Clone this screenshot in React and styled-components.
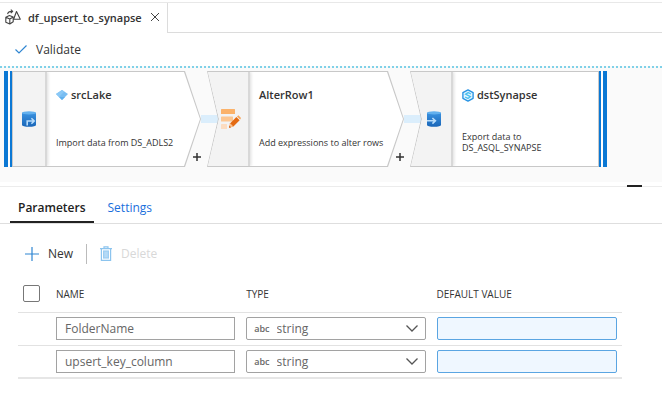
import React, { useState } from 'react';
import styled, { createGlobalStyle } from 'styled-components';

const steps = [
    { name: 'srcLake', text: 'Import data from DS_ADLS2', kind: 'source' },
    { name: 'AlterRow1', text: 'Add expressions to alter rows', kind: 'alter' },
    { name: 'dstSynapse', text: 'Export data to DS_ASQL_SYNAPSE', kind: 'sink' }
];

const parameters = [
    { name: 'FolderName', type: 'string', value: '' },
    { name: 'upsert_key_column', type: 'string', value: '' }
];

function FlowIcon(){
    return(
        <svg width='16' height='16' viewBox='0 0 16 16' fill='none' stroke='#444' strokeWidth='1.1' strokeLinejoin='round'>
            <path d='M11.5 2.5L15.3 10.2H8.6Z' />
            <path d='M.8 8.2L4.4 6.6L8.2 8V12.8L4.8 15L.8 13.2Z M.8 8.2L4.8 10L8.2 8 M4.8 10V15' />
            <path d='M2.6 5.2C3 3.2 4.6 2.2 7.4 2.4M5.8 .6L7.7 2.4L5.8 4.2' />
        </svg>
    )
}

function DatabaseIcon({ sink }){
    return(
        <svg width='14' height='16' viewBox='0 0 14 16'>
            <defs>
                <linearGradient id='drum' x1='0' y1='0' x2='0' y2='1'>
                    <stop offset='0' stopColor='#3a92e0' />
                    <stop offset='1' stopColor='#1a66b8' />
                </linearGradient>
            </defs>
            <path d='M0 1.8V14C0 15 3 15.8 7 15.8S14 15 14 14V1.8Z' fill='url(#drum)' />
            <ellipse cx='7' cy='1.9' rx='7' ry='1.7' fill='#62b0ee' />
            {sink
                ? <path d='M0 9.8H8M5.4 7L8.4 9.8L5.4 12.6' fill='none' stroke='#b8dcfa' strokeWidth='1.6' />
                : <path d='M5.2 14.6V10H12M9.4 7.2L12.2 10L9.4 12.8' fill='none' stroke='#b8dcfa' strokeWidth='1.6' />}
        </svg>
    )
}

function AlterIcon(){
    return(
        <svg width='20' height='20' viewBox='0 0 20 20'>
            <rect x='0' y='0' width='14' height='5' rx='.5' fill='#fbb26a' />
            <rect x='0' y='7.4' width='12' height='5' rx='.5' fill='#fcc691' />
            <rect x='0' y='15' width='6' height='5' rx='.5' fill='#fcdcc0' />
            <path d='M8 18.8L9.2 14.2L15.4 8L18.6 11.2L12.4 17.4Z' fill='#e46a12' />
            <path d='M16 7.4L17.4 6.2L20 9L19.2 10.6Z' fill='#f5a55c' />
            <path d='M8 18.8L9.2 14.2L12.4 17.4Z' fill='#f9c08c' />
            <path d='M8 18.8L8.6 16.8L10 18.2Z' fill='#c95508' />
        </svg>
    )
}

function LakeIcon(){
    return(
        <svg width='12' height='12' viewBox='0 0 12 12'>
            <path d='M0 5L6 1L12 5L6 11Z' fill='#78bdf2' />
            <path d='M0 5L6 1L8.4 2.6L3 8Z' fill='#8ac8f6' />
            <path d='M3 8H9L6 11Z' fill='#5fb0ee' />
        </svg>
    )
}

function SynapseIcon(){
    return(
        <svg width='12' height='13' viewBox='0 0 12 13'>
            <path d='M6 .9L11.1 3.7V9.3L6 12.1L.9 9.3V3.7Z' fill='#e4f6ff' stroke='#2b95e4' strokeWidth='1.4' strokeLinejoin='round' />
            <path d='M9 5L6.2 3.6L3.6 5.2L8.4 7.6L6 9.4L3 8' fill='none' stroke='#4cc0f0' strokeWidth='1.3' />
        </svg>
    )
}

function Step({ step, last }){
    return(
        <StepBox>
            <Outline $kind={step.kind}>
                {step.kind === 'source' && <EdgeBars />}
                <Face $kind={step.kind}>
                    <StepIcon $kind={step.kind}>
                        {step.kind === 'alter' ? <AlterIcon /> : <DatabaseIcon sink={step.kind === 'sink'} />}
                    </StepIcon>
                    <StepBody>
                        <StepName>
                            {step.kind === 'source' && <LakeIcon />}
                            {step.kind === 'sink' && <SynapseIcon />}
                            {step.name}
                        </StepName>
                        <StepText>{step.text}</StepText>
                    </StepBody>
                </Face>
                {step.kind === 'sink' && <EdgeBars $right />}
            </Outline>
            {!last && <Connector />}
            {!last && (
                <AddButton aria-label='Add step'>
                    <svg width='8' height='8' viewBox='0 0 8 8' stroke='#333' strokeWidth='1.5'>
                        <path d='M4 0V8M0 4H8' />
                    </svg>
                </AddButton>
            )}
        </StepBox>
    )
}

function App(){
    const [rows, setRows] = useState(parameters);

    const update = (index, key, value) => {
        setRows(rows.map((row, i) => i === index ? { ...row, [key]: value } : row));
    }

    return(
        <Page>
            <GlobalStyle />
            <TabStrip>
                <FileTab>
                    <FlowIcon />
                    <span>df_upsert_to_synapse</span>
                    <IconButton aria-label='Close'>
                        <svg width='8' height='8' viewBox='0 0 8 8' stroke='#444' strokeWidth='1'>
                            <path d='M0 0L8 8M8 0L0 8' />
                        </svg>
                    </IconButton>
                </FileTab>
            </TabStrip>

            <Toolbar>
                <ToolButton>
                    <svg width='12' height='9' viewBox='0 0 12 9' fill='none' stroke='#2f86d2' strokeWidth='1.2'>
                        <path d='M.5 4.5L4 8L11.5 .5' />
                    </svg>
                    Validate
                </ToolButton>
            </Toolbar>

            <Canvas>
                {steps.map((step, i) => (
                    <Step key={step.name} step={step} last={i === steps.length - 1} />
                ))}
            </Canvas>
            <Splitter><Handle /></Splitter>

            <PanelTabs>
                <PanelTab $active>Parameters</PanelTab>
                <PanelTab>Settings</PanelTab>
            </PanelTabs>

            <Actions>
                <ActionButton>
                    <svg width='14' height='14' viewBox='0 0 14 14' stroke='#2f86d2' strokeWidth='1.2'>
                        <path d='M7 0V14M0 7H14' />
                    </svg>
                    New
                </ActionButton>
                <Separator />
                <ActionButton disabled>
                    <svg width='12' height='15' viewBox='0 0 12 15' fill='none' stroke='#8cc4ee' strokeWidth='1.2'>
                        <path d='M0 2.6H12M4 2.4V.8H8V2.4M1.4 2.8V14.4H10.6V2.8' />
                        <rect x='3.6' y='5' width='4.8' height='7' fill='#b5daf6' stroke='#9ccdf2' />
                    </svg>
                    Delete
                </ActionButton>
            </Actions>

            <ParamTable>
                <colgroup>
                    <CheckCol />
                    <FieldCol />
                    <FieldCol />
                    <col />
                </colgroup>
                <thead>
                    <tr>
                        <th><Checkbox type='checkbox' aria-label='Select all' /></th>
                        <th>NAME</th>
                        <th>TYPE</th>
                        <th>DEFAULT VALUE</th>
                    </tr>
                </thead>
                <tbody>
                    {rows.map((row, i) => (
                        <tr key={i}>
                            <td></td>
                            <td>
                                <TextField aria-label='Name' value={row.name} onChange={e => update(i, 'name', e.target.value)} />
                            </td>
                            <td>
                                <SelectBox>
                                    <small>abc</small>
                                    <select aria-label='Type' value={row.type} onChange={e => update(i, 'type', e.target.value)}>
                                        <option>string</option>
                                    </select>
                                    <svg width='12' height='7' viewBox='0 0 12 7' fill='none' stroke='#555' strokeWidth='1.3'>
                                        <path d='M.5 .5L6 6L11.5 .5' />
                                    </svg>
                                </SelectBox>
                            </td>
                            <td>
                                <TextField $highlight aria-label='Default value' value={row.value} onChange={e => update(i, 'value', e.target.value)} />
                            </td>
                        </tr>
                    ))}
                </tbody>
            </ParamTable>
        </Page>
    )
}

export default App;

const GlobalStyle = createGlobalStyle`
    *{
        box-sizing: border-box;
    }

    body{
        margin: 0;
        background: #fff;
    }

    body, button, input, select{
        font-family: 'Open Sans', 'Noto Sans', sans-serif;
        font-size: 12px;
        color: #333;
    }

    button{
        border: none;
        padding: 0;
        background: none;
    }

    svg{
        display: block;
        flex: none;
    }
`

const arrowShapes = {
    source: 'polygon(0 0, calc(100% - 16px) 0, 100% 50%, calc(100% - 16px) 100%, 0 100%)',
    alter: 'polygon(0 0, calc(100% - 16px) 0, 100% 50%, calc(100% - 16px) 100%, 0 100%, 11px 50%)',
    sink: 'polygon(0 0, 100% 0, 100% 100%, 0 100%, 11px 50%)'
}

const Page = styled.main`
    padding-top: 2px;
`

const TabStrip = styled.div`
    display: flex;
    height: 31px;
    border-top: 1px solid #e8e8e8;

    &::after{
        content: '';
        flex: 1;
        border-left: 1px solid #dcdcdc;
        border-bottom: 1px solid #dcdcdc;
    }
`

const FileTab = styled.div`
    display: flex;
    align-items: center;
    gap: 7px;
    padding: 0 8px 2px 5px;
    font-size: 11px;
    font-weight: 600;
`

const IconButton = styled.button`
    margin-left: 2px;
`

const Toolbar = styled.div`
    display: flex;
    align-items: center;
    height: 33px;
    padding: 0 15px;
`

const ToolButton = styled.button`
    display: flex;
    align-items: center;
    gap: 9px;
`

const Canvas = styled.section`
    display: flex;
    gap: 6px;
    padding: 3px 4px 15px;
    border-top: 2px dotted #7fd1e8;
    background: #fafafa;
`

const StepBox = styled.article`
    position: relative;
    flex: 0 0 197px;
    height: 96px;
`

const Outline = styled.div`
    display: flex;
    height: 100%;
    background: #c8c8c8;
    clip-path: ${props => arrowShapes[props.$kind]};
`

const EdgeBars = styled.div`
    width: 8px;
    background: #fff;
    border: solid #0b78d4;
    border-width: ${props => props.$right ? '0 4px 0 2px' : '0 2px 0 4px'};
`

const Face = styled.div`
    flex: 1;
    display: flex;
    margin: 1px;
    background: #fff;
    clip-path: ${props => arrowShapes[props.$kind]};
`

const StepIcon = styled.div`
    display: flex;
    align-items: center;
    justify-content: center;
    flex: 0 0 ${props => props.$kind === 'source' ? 34 : 42}px;
    padding-left: ${props => props.$kind === 'source' ? 0 : 6}px;
    background: #f3f3f3;
    border-right: 2px solid #d8d8d8;
    box-shadow: 1px 0 3px #ddd;
`

const StepBody = styled.div`
    flex: 1;
    display: flex;
    flex-direction: column;
    justify-content: space-between;
    padding: 14px 16px 13px 9px;
`

const StepName = styled.div`
    display: flex;
    align-items: center;
    gap: 3px;
    font-size: 11px;
    font-weight: 600;
    line-height: 18px;
`

const StepText = styled.div`
    display: flex;
    align-items: center;
    min-height: 22px;
    font-size: 9px;
    line-height: 11px;
`

const Connector = styled.div`
    position: absolute;
    top: 44px;
    left: 100%;
    width: 17px;
    height: 8px;
    background: #dbeefc;
`

const AddButton = styled.button`
    position: absolute;
    right: 0;
    bottom: 6px;
`

const Splitter = styled.div`
    display: flex;
    justify-content: flex-end;
    align-items: flex-end;
    height: 5px;
    padding-right: 20px;
    border-bottom: 1px solid #ececec;
`

const Handle = styled.div`
    width: 15px;
    height: 2px;
    margin-bottom: -1px;
    background: #222;
`

const PanelTabs = styled.nav`
    display: flex;
    gap: 6px;
    height: 37px;
    padding: 0 10px;
    border-bottom: 1px solid #dedede;
`

const PanelTab = styled.button`
    padding: 7px 8px 0;
    font-weight: ${props => props.$active ? 600 : 400};
    color: ${props => props.$active ? '#222' : '#1a6fdc'};
    border-bottom: 2px solid ${props => props.$active ? '#222' : 'transparent'};
`

const Actions = styled.div`
    display: flex;
    align-items: center;
    gap: 13px;
    height: 52px;
    padding: 7px 25px 0;
`

const ActionButton = styled.button`
    display: flex;
    align-items: center;
    gap: 9px;

    &:disabled{
        color: #d8d8d8;
    }
`

const Separator = styled.div`
    width: 1px;
    height: 20px;
    background: #bbb;
`

const ParamTable = styled.table`
    width: calc(100% - 58px);
    margin-left: 18px;
    table-layout: fixed;
    border-collapse: collapse;

    tr{
        height: 33px;
        border-bottom: 1px solid #e2e2e2;
    }

    thead tr{
        height: 36px;
    }

    tbody tr:last-child{
        border-bottom: 2px solid #e6e6e6;
    }

    th, td{
        padding: 0 11px 0 0;
        text-align: left;
    }

    th{
        font-size: 10px;
        font-weight: 400;
    }

    th:first-child{
        padding-left: 5px;
    }

    th:last-child, td:last-child{
        padding-right: 5px;
    }
`

const CheckCol = styled.col`
    width: 38px;
`

const FieldCol = styled.col`
    width: 31.5%;
`

const Checkbox = styled.input`
    appearance: none;
    display: block;
    width: 17px;
    height: 17px;
    margin: 0;
    border: 1px solid #777;
    border-radius: 2px;
`

const TextField = styled.input`
    display: block;
    width: 100%;
    height: 23px;
    padding: 0 8px;
    color: #666;
    border: 1px solid ${props => props.$highlight ? '#5aa5e2' : '#a2a2a2'};
    border-radius: ${props => props.$highlight ? '2px' : '0'};
    background: ${props => props.$highlight ? '#eff7ff' : '#fff'};
`

const SelectBox = styled.div`
    display: flex;
    align-items: center;
    height: 23px;
    padding: 0 7px;
    border: 1px solid #a2a2a2;
    border-radius: 2px;

    small{
        font-size: 9px;
        font-weight: 600;
        color: #666;
    }

    select{
        flex: 1;
        appearance: none;
        padding: 0 7px;
        border: none;
        color: #666;
        background: none;
    }
`
